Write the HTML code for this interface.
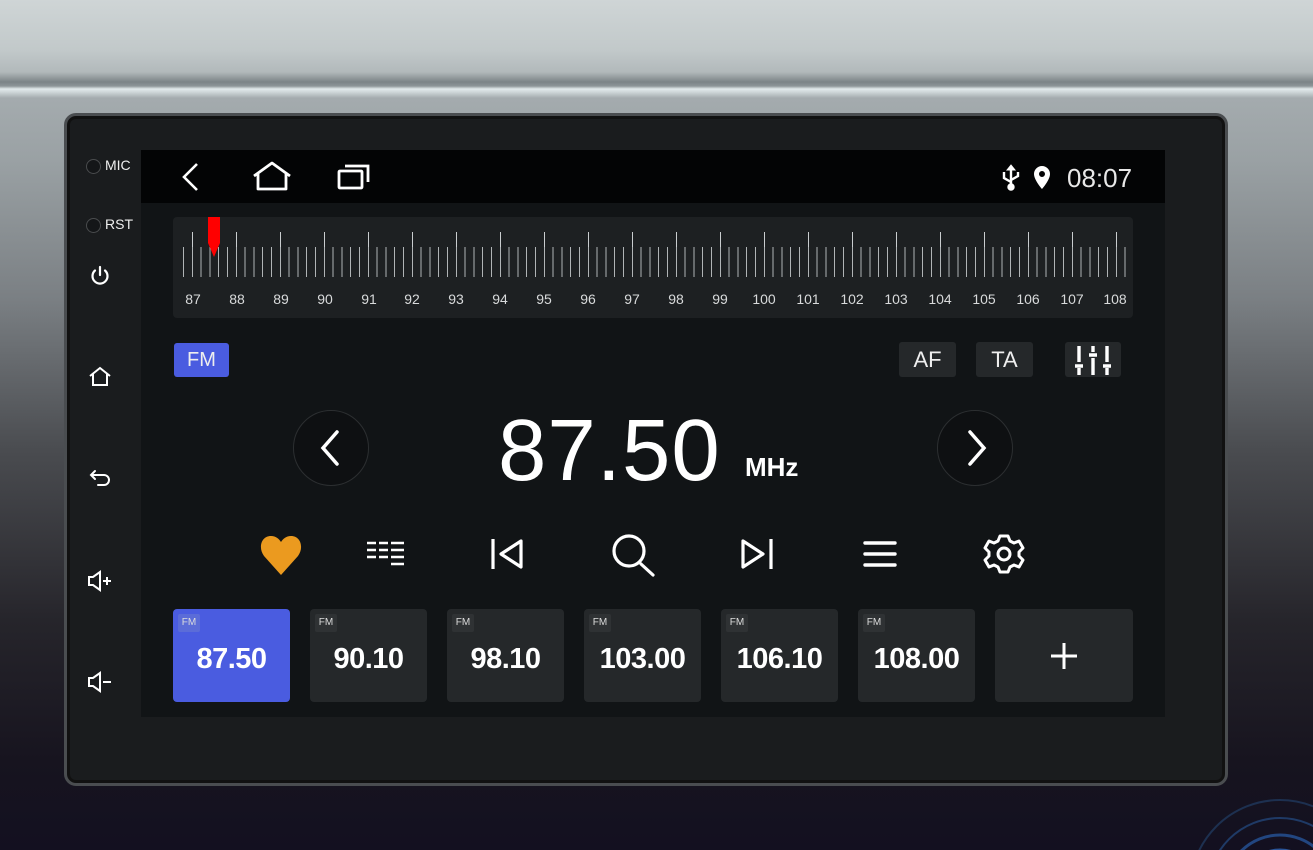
<!DOCTYPE html>
<html><head><meta charset="utf-8">
<style>
*{margin:0;padding:0;box-sizing:border-box}
html,body{width:1313px;height:850px;overflow:hidden}
body{position:relative;font-family:"Liberation Sans",sans-serif;
background:linear-gradient(180deg,#cfd5d6 0px,#c2c9ca 50px,#b2b9bb 72px,#7c8487 82px,#8d9598 86px,#e2eaec 89px,#c8d0d2 93px,#a4abae 98px,#9aa1a4 160px,#7a7f83 300px,#4a4c50 450px,#26252b 620px,#17141f 760px,#131020 850px);}
.abs{position:absolute}
.bezel{left:64px;top:113px;width:1164px;height:673px;border-radius:12px;background:#1a1c1e;border:3px solid #4a4d50;box-shadow:inset 0 0 0 3px #111}
.screen{left:141px;top:150px;width:1024px;height:567px;background:#111416}
.status{left:141px;top:150px;width:1024px;height:53px;background:#030405}
.side{color:#eee;font-size:14px}
.dot{display:inline-block;width:15px;height:15px;border-radius:50%;border:1px solid #4a4c4e;background:#141618;vertical-align:middle;margin-right:4px}
.scale{left:173px;top:217px;width:960px;height:101px;background:#1d2022;border-radius:4px}
.short{left:183px;top:247px;width:945px;height:30px;background:repeating-linear-gradient(90deg,#b0b4b6 0 1px,transparent 1px 8.8px)}
.tall{left:191.5px;top:232px;width:930px;height:15px;background:repeating-linear-gradient(90deg,#c9cdcf 0 1px,transparent 1px 44px)}
.lbl{top:291px;font-size:14px;color:#d8dadb;width:40px;text-align:center;margin-left:-20px}
.btn{background:#25282a;border-radius:3px;color:#eee;font-size:22px;text-align:center;line-height:35px}
.circ{width:76px;height:76px;border-radius:50%;border:1px solid #2c2f31;background:#0e1012}
.preset{top:609px;height:93px;width:117px;background:#25282a;border-radius:4px;color:#fff}
.preset .fm{position:absolute;left:5px;top:5px;width:22px;height:18px;background:#2f3234;border-radius:2px;font-size:10px;line-height:18px;text-align:center;color:#ddd}
.preset .n{position:absolute;left:0;right:0;top:34px;text-align:center;font-size:29px;font-weight:bold;letter-spacing:-0.5px}
</style></head><body>
<div class="abs bezel"></div>
<div class="abs screen"></div>
<div class="abs status"></div>

<div class="abs side" style="left:86px;top:157px"><span class="dot"></span>MIC</div>
<div class="abs side" style="left:86px;top:216px"><span class="dot"></span>RST</div>
<svg class="abs" style="left:88px;top:264px" width="24" height="24" viewBox="0 0 24 24" fill="none" stroke="#fff" stroke-width="2.2" stroke-linecap="round"><path d="M12 3v8"/><path d="M7 6.5a7.5 7.5 0 1 0 10 0"/></svg>
<svg class="abs" style="left:88px;top:365px" width="24" height="24" viewBox="0 0 24 24" fill="none" stroke="#fff" stroke-width="2"><path d="M2 11L12 3l10 8M5 9v11h14V9"/></svg>
<svg class="abs" style="left:88px;top:468px" width="26" height="22" viewBox="0 0 26 22" fill="none" stroke="#fff" stroke-width="2" stroke-linecap="round"><path d="M7 3L3 7l4 4M3 7h13a5 5 0 0 1 0 10h-6"/></svg>
<svg class="abs" style="left:86px;top:570px" width="30" height="22" viewBox="0 0 30 22" fill="none" stroke="#fff" stroke-width="2"><path d="M3 7h4l7-5v18l-7-5H3z"/><path d="M17 11h8M21 7v8"/></svg>
<svg class="abs" style="left:86px;top:671px" width="30" height="22" viewBox="0 0 30 22" fill="none" stroke="#fff" stroke-width="2"><path d="M3 7h4l7-5v18l-7-5H3z"/><path d="M17 11h8"/></svg>

<svg class="abs" style="left:178px;top:162px" width="24" height="30" viewBox="0 0 24 30" fill="none" stroke="#fff" stroke-width="2.6"><path d="M19 2L6 15l13 13"/></svg>
<svg class="abs" style="left:252px;top:160px" width="40" height="32" viewBox="0 0 40 32" fill="none" stroke="#fff" stroke-width="2.8" stroke-linejoin="round"><path d="M2 16L20 3l18 13M6 14v15h28V14"/></svg>
<svg class="abs" style="left:336px;top:162px" width="36" height="30" viewBox="0 0 36 30" fill="none" stroke="#fff" stroke-width="2.8"><rect x="3" y="9" width="23" height="17" rx="1"/><path d="M9 4h23v16"/></svg>
<svg class="abs" style="left:1000px;top:163px" width="22" height="28" viewBox="0 0 22 28" fill="#fff" stroke="#fff" stroke-width="2.4"><path d="M11 3v22" /><path d="M7 7l4-5 4 5z" stroke-width="1"/><path d="M4 9v6l7 4M18 9v4l-7 4" fill="none"/><circle cx="11" cy="24" r="2.5"/></svg>
<svg class="abs" style="left:1031px;top:165px" width="22" height="26" viewBox="0 0 22 26"><path fill="#fff" d="M11 1a8 8 0 0 0-8 8c0 6 8 15 8 15s8-9 8-15a8 8 0 0 0-8-8zm0 11a3 3 0 1 1 0-6 3 3 0 0 1 0 6z"/></svg>
<div class="abs" style="left:1067px;top:163px;color:#e8e8e8;font-size:26px">08:07</div>

<div class="abs scale"></div>
<div class="abs short"></div>
<div class="abs tall"></div>
<svg class="abs" style="left:207px;top:217px" width="14" height="42" viewBox="0 0 14 42"><path fill="#f00" d="M1 0h12v26L7 40 1 26z"/></svg>
<div class="abs lbl" style="left:193px">87</div><div class="abs lbl" style="left:237px">88</div><div class="abs lbl" style="left:281px">89</div><div class="abs lbl" style="left:325px">90</div><div class="abs lbl" style="left:369px">91</div><div class="abs lbl" style="left:412px">92</div><div class="abs lbl" style="left:456px">93</div><div class="abs lbl" style="left:500px">94</div><div class="abs lbl" style="left:544px">95</div><div class="abs lbl" style="left:588px">96</div><div class="abs lbl" style="left:632px">97</div><div class="abs lbl" style="left:676px">98</div><div class="abs lbl" style="left:720px">99</div><div class="abs lbl" style="left:764px">100</div><div class="abs lbl" style="left:808px">101</div><div class="abs lbl" style="left:852px">102</div><div class="abs lbl" style="left:896px">103</div><div class="abs lbl" style="left:940px">104</div><div class="abs lbl" style="left:984px">105</div><div class="abs lbl" style="left:1028px">106</div><div class="abs lbl" style="left:1072px">107</div><div class="abs lbl" style="left:1115px">108</div>

<div class="abs btn" style="left:174px;top:343px;width:55px;height:34px;background:#4a5ce0;font-size:20px;line-height:34px">FM</div>
<div class="abs btn" style="left:899px;top:342px;width:57px;height:35px">AF</div>
<div class="abs btn" style="left:976px;top:342px;width:57px;height:35px">TA</div>
<div class="abs btn" style="left:1065px;top:342px;width:56px;height:35px"></div>
<svg class="abs" style="left:1073px;top:344px" width="40" height="32" viewBox="0 0 40 32" stroke="#fff" stroke-width="3.4"><path d="M6 2v16M6 24v7M2 22h8M20 2v6M20 14v17M16 11h8M34 2v16M34 24v7M30 22h8"/></svg>

<div class="abs circ" style="left:293px;top:410px"></div>
<svg class="abs" style="left:315px;top:428px" width="30" height="40" viewBox="0 0 30 40" fill="none" stroke="#fff" stroke-width="3.5" stroke-linecap="round"><path d="M22 4L8 20l14 16"/></svg>
<div class="abs circ" style="left:937px;top:410px"></div>
<svg class="abs" style="left:962px;top:428px" width="30" height="40" viewBox="0 0 30 40" fill="none" stroke="#fff" stroke-width="3.5" stroke-linecap="round"><path d="M8 4l14 16L8 36"/></svg>
<div class="abs" style="left:498px;top:401px;color:#fff;font-size:87px;letter-spacing:1px">87.50</div>
<div class="abs" style="left:745px;top:452px;color:#fff;font-size:26px;font-weight:bold">MHz</div>

<svg class="abs" style="left:259px;top:533px" width="44" height="44" viewBox="0 0 44 44"><path fill="#eb9a1f" d="M22 42L5 23C-1 15 2 3 12 3c5 0 8 3 10 6 2-3 5-6 10-6 10 0 13 12 7 20z"/></svg>
<svg class="abs" style="left:366px;top:540px" width="40" height="30" viewBox="0 0 40 30" stroke="#fff" stroke-width="2.6"><path d="M1 3h9M13 3h9M25 3h13M1 10h9M13 10h9M25 10h13M1 17h9M13 17h9M25 17h13M25 24h13"/></svg>
<svg class="abs" style="left:489px;top:536px" width="38" height="36" viewBox="0 0 38 36" fill="none" stroke="#fff" stroke-width="3.2" stroke-linejoin="round"><path d="M4 3v30"/><path d="M32 5L12 18l20 13z"/></svg>
<svg class="abs" style="left:610px;top:532px" width="48" height="46" viewBox="0 0 48 46" fill="none" stroke="#fff" stroke-width="3.2" stroke-linecap="round"><circle cx="19" cy="19" r="15"/><path d="M31 32l12 11"/></svg>
<svg class="abs" style="left:737px;top:536px" width="38" height="36" viewBox="0 0 38 36" fill="none" stroke="#fff" stroke-width="3.2" stroke-linejoin="round"><path d="M34 3v30"/><path d="M6 5l20 13L6 31z"/></svg>
<svg class="abs" style="left:862px;top:540px" width="36" height="28" viewBox="0 0 36 28" stroke="#fff" stroke-width="3.4" stroke-linecap="round"><path d="M3 3h30M3 14h30M3 25h30"/></svg>
<svg class="abs" style="left:982px;top:532px" width="44" height="44" viewBox="0 0 44 44" fill="none" stroke="#fff" stroke-width="3" stroke-linejoin="round"><path d="M18 4h8l2 5 4 2 5-2 4 7-4 4v4l4 4-4 7-5-2-4 2-2 5h-8l-2-5-4-2-5 2-4-7 4-4v-4l-4-4 4-7 5 2 4-2z"/><circle cx="22" cy="22" r="6"/></svg>

<div class="abs preset" style="left:173px;background:#4a5ce0"><div class="fm" style="background:#5b6cd8">FM</div><div class="n">87.50</div></div>
<div class="abs preset" style="left:310px"><div class="fm">FM</div><div class="n">90.10</div></div>
<div class="abs preset" style="left:447px"><div class="fm">FM</div><div class="n">98.10</div></div>
<div class="abs preset" style="left:584px"><div class="fm">FM</div><div class="n">103.00</div></div>
<div class="abs preset" style="left:721px"><div class="fm">FM</div><div class="n">106.10</div></div>
<div class="abs preset" style="left:858px"><div class="fm">FM</div><div class="n">108.00</div></div>
<div class="abs preset" style="left:995px;width:138px"></div>
<svg class="abs" style="left:1050px;top:642px" width="28" height="28" viewBox="0 0 28 28" stroke="#fff" stroke-width="3"><path d="M14 1v26M1 14h26"/></svg>

<svg class="abs" style="left:1180px;top:780px" width="133" height="70" viewBox="0 0 133 70" fill="none"><circle cx="100" cy="110" r="90" stroke="#1d3050" stroke-width="2"/><circle cx="100" cy="110" r="72" stroke="#1f3a66" stroke-width="2"/><circle cx="100" cy="110" r="55" stroke="#224680" stroke-width="3"/><circle cx="100" cy="110" r="40" stroke="#2a5498" stroke-width="3"/></svg>
</body></html>
